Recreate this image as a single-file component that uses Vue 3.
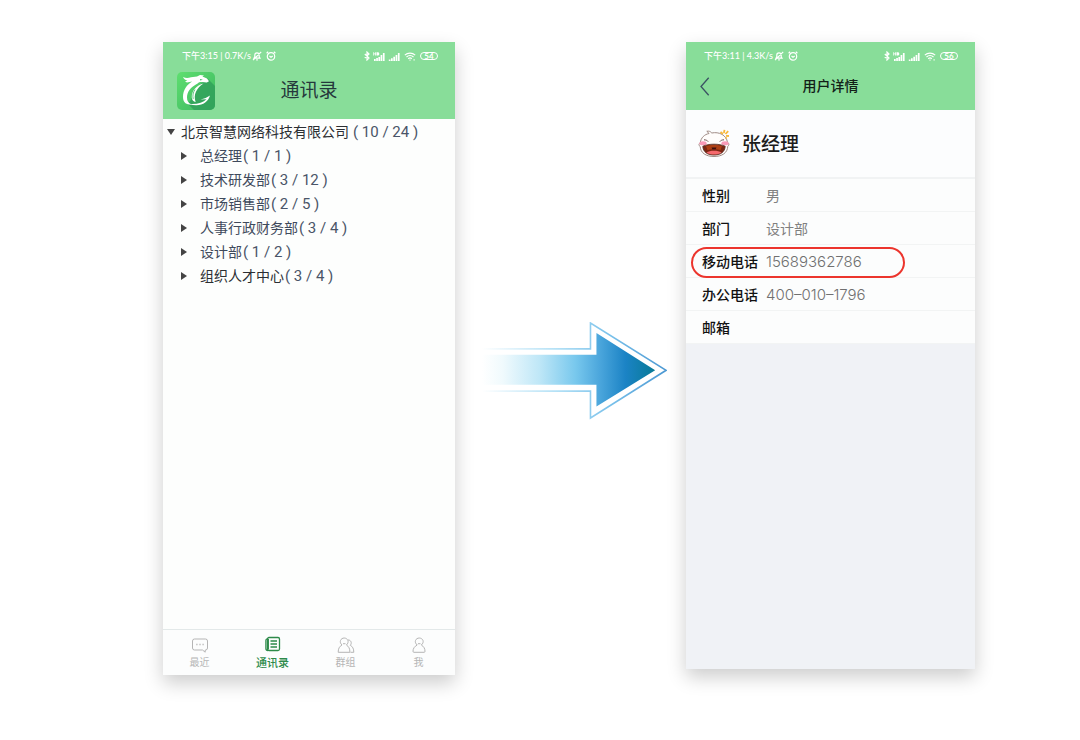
<script setup>
import { ref } from 'vue'

const statusBars = {
  contacts: { time: '下午3:15 | 0.7K/s', battery: '54' },
  detail: { time: '下午3:11 | 4.3K/s', battery: '56' }
}

const open = ref(true)
const activeTab = ref('contacts')

const departments = [
  { name: '总经理', count: '( 1 / 1 )' },
  { name: '技术研发部', count: '( 3 / 12 )' },
  { name: '市场销售部', count: '( 2 / 5 )' },
  { name: '人事行政财务部', count: '( 3 / 4 )' },
  { name: '设计部', count: '( 1 / 2 )' },
  { name: '组织人才中心', count: '( 3 / 4 )', dark: true }
]

const tabs = [
  { id: 'recent', label: '最近' },
  { id: 'contacts', label: '通讯录' },
  { id: 'groups', label: '群组' },
  { id: 'me', label: '我' }
]

const fields = [
  { label: '性别', value: '男' },
  { label: '部门', value: '设计部' },
  { label: '移动电话', value: '15689362786', number: true, marked: true },
  { label: '办公电话', value: '400–010–1796', number: true },
  { label: '邮箱', value: '' }
]
</script>

<template>
  <main class="stage">
    <section
      v-for="(bar, screen) in statusBars"
      :key="screen"
      class="phone"
      :class="screen"
    >
      <header class="head">
        <div class="status">
          <span class="status-text">{{ bar.time }}</span>
          <svg class="s-icon" width="10" height="10" viewBox="0 0 10 10">
            <path d="M2 7.2h6L7.2 5.8V4A2.2 2.2 0 0 0 2.8 4v1.8zM4.2 8.8h1.6M1 9.2L9.2.8" />
          </svg>
          <svg class="s-icon alarm" width="10" height="10" viewBox="0 0 10 10">
            <circle cx="5" cy="5.4" r="3.7" />
            <path d="M3.5 5l1.5 1.3L6.7 5M.6 2.2L2.2.7M9.4 2.2L7.8.7" />
          </svg>
          <span class="grow"></span>
          <svg class="s-icon" width="6" height="10" viewBox="0 0 6 10">
            <path d="M.8 3l4.2 4-2 2V1l2 2L.8 7" />
          </svg>
          <svg class="s-fill sig" width="12" height="9" viewBox="0 0 12 9">
            <path d="M.3.3h.8v1.2h1V.3h.8v3.200h-.8V2.300h-1v1.200H.3zM3.500.3h1.800l.9.8v1.600l-.9.8H3.500zM1 7h1.700v2H1zM3.200 6h1.700v3H3.200zM5.400 5h1.700v4H5.400zM7.600 3h1.700v6H7.600zM9.900 1h1.700v8H9.900z" />
          </svg>
          <svg class="s-fill sig" width="12" height="9" viewBox="0 0 12 9">
            <path d="M.8 7.400h1.700V9H.8zM3 6.200h1.700V9H3zM5.300 4.800H7V9H5.300zM7.600 3h1.700v6H7.600zM9.900 1h1.700v8H9.900z" />
          </svg>
          <svg class="s-icon wifi" width="12" height="9" viewBox="0 0 12 9">
            <path d="M.8 3.100c3-2.600 7.400-2.600 10.400 0M2.500 5c2-1.800 5-1.800 7 0M4.200 6.700c1.100-.9 2.500-.9 3.600 0M5.500 8.200h1M9.500 7.900h1.200" />
          </svg>
          <span class="battery">{{ bar.battery }}</span>
        </div>

        <div class="titlebar">
          <svg v-if="screen === 'contacts'" class="logo" width="38" height="38" viewBox="0 0 38 38" aria-label="logo">
            <defs>
              <linearGradient id="logoBg" x1="0" x2="1" y1="0" y2="1">
                <stop offset="0" stop-color="#5fdf70" />
                <stop offset="1" stop-color="#3bb660" />
              </linearGradient>
            </defs>
            <rect width="38" height="38" rx="5" fill="url(#logoBg)" />
            <path d="M30 6l8 8v19a5 5 0 0 1-5 5H17l-6-6 13-20z" fill="#2f9f5a" opacity=".8" />
            <path d="M6 5c3 1.200 5 1.100 8 .2l6-.7 3-1.500 4 .4-1.600 1.200 4.600 1.900L32 9.300l-2.200 1.300-4.800-.5c-2-.1-3.200.4-4.400 1.400C13.500 15 10 20 10 25.500c0 3.700 1.500 5.700 4.200 6.700C9 33.200 6 30.200 6 24.800 6 18.300 10 12.300 15.200 9.500L10 10.600l-2-1.200 2.300-.9C8 8 6.800 6.800 6 5z" fill="#fff" />
            <path d="M23 7l2.800.8-2.600.6z" fill="#43b968" />
            <path d="M26.500 11.500C19.500 13 14.500 19 14.800 25.500c.1 2.500 1.500 4 3.900 4.500-2.700-7 .8-14 7.800-18.500z" fill="#fff" />
            <path d="M18 17.500c-2 3-2.500 6-1.800 9.500" fill="none" stroke="#43b968" stroke-width=".8" />
            <path d="M12 32c8 .6 14-1 17.500-4.700l-6 .3c4-1 6.500-2.200 9.500-4.100C31 31 23 35.500 12 32z" fill="#fff" />
          </svg>
          <button v-else class="back" type="button" aria-label="返回">
            <svg width="10" height="19" viewBox="0 0 10 19"><path d="M8.700.8L1 9.500l7.700 8.700" /></svg>
          </button>
          <h1>{{ screen === 'contacts' ? '通讯录' : '用户详情' }}</h1>
        </div>
      </header>

      <template v-if="screen === 'contacts'">
        <div class="tree">
          <button class="node root" type="button" :aria-expanded="open" @click="open = !open">
            <span class="caret down"></span>
            <span>北京智慧网络科技有限公司</span>
            <span class="count">( 10 / 24 )</span>
          </button>
          <ul v-show="open">
            <li v-for="d in departments" :key="d.name">
              <button class="node" type="button" :class="{ dark: d.dark }">
                <span class="caret"></span>
                <span>{{ d.name }}</span>
                <span class="count">{{ d.count }}</span>
              </button>
            </li>
          </ul>
        </div>

        <nav class="tabs">
          <button
            v-for="t in tabs"
            :key="t.id"
            type="button"
            :class="{ active: activeTab === t.id }"
            @click="activeTab = t.id"
          >
            <svg width="18" height="18" viewBox="0 0 18 18">
              <template v-if="t.id === 'recent'">
                <path d="M3.500 3h11a2 2 0 0 1 2 2v7a2 2 0 0 1-2 2h-.3v2.200L11.500 14h-8a2 2 0 0 1-2-2V5a2 2 0 0 1 2-2z" />
                <path class="dots" d="M5.300 8.500h1.200M8.400 8.500h1.200M11.500 8.500h1.200" />
              </template>
              <template v-else-if="t.id === 'contacts'">
                <rect x="3.500" y="1.500" width="12" height="13" rx="1.500" />
                <path d="M3.500 3c-1.200 0-1.600.5-1.600 1.800v7.600c0 1.400.5 2.100 2.100 2.100M4.300 3v10.500M6.500 5h6.500M6.500 8h6.500M6.500 11h6.500" />
              </template>
              <template v-else-if="t.id === 'groups'">
                <path d="M5 9C3.400 7.500 3 6 3.500 4.500c1.200-3.300 6.200-3.300 7.400 0 .5 1.500.1 3-1.500 4.500 2.400 1.500 3.500 3.500 3.500 7.300H1.200c0-3.800 1.200-5.800 3.800-7.300zM6 7.700h2.500M11 4c2.500-.3 4.500 2.700 2.300 5.300 2.300 1.200 3.500 3.400 3.500 7h-3.300" />
              </template>
              <template v-else>
                <path d="M7.200 9C5.500 7.500 5 6 5.500 4.500c1.200-3.300 6.300-3.300 7.500 0 .5 1.500 0 3-1.700 4.500 2.500 1.500 3.700 3.500 3.700 6.300 0 .7-.3 1-1 1H4c-.7 0-1-.3-1-1C3 12.500 4.500 10.500 7.200 9zM8 7.700h2.500" />
              </template>
            </svg>
            <span>{{ t.label }}</span>
          </button>
        </nav>
      </template>

      <template v-else>
        <div class="person">
          <svg width="32" height="30" viewBox="0 0 32 30" aria-label="头像">
            <path d="M11 4.500C10.300 3.500 9.700 2.800 8.800 2.300c2-.5 3.700.1 5 1.700C21 2.500 28.500 6 29.500 13.500c1.700.5 2 2.600.3 3.700C29.500 24 24 27.500 16 27.500S2.500 24 2.200 17.500C.5 16.700.6 14.500 2.200 14 3 8.500 6.500 5.500 11 4.500z" fill="#fffdfc" stroke="#a08c86" stroke-width="1" />
            <ellipse cx="5" cy="14.200" rx="3.600" ry="2" fill="#f99ab8" />
            <ellipse cx="27" cy="14.200" rx="3.600" ry="2" fill="#f99ab8" />
            <path d="M6 10.800c2 0 3.300.7 4.200 1.800M26 10.800c-2 0-3.300.7-4.200 1.800" fill="none" stroke="#6a5050" stroke-width="1" />
            <path d="M4.800 17.200c6-2.700 16.400-2.700 22.400 0-.2 5.600-4.500 8.900-11.200 8.900S5 22.800 4.800 17.200z" fill="#7c2613" stroke="#563026" stroke-width=".8" />
            <path d="M8 17c4.500-1.500 11.500-1.500 16 0l-1.500 4.200c-3.500-1.400-9.500-1.400-13 0z" fill="#ad4015" />
            <path d="M13.500 18.500h5l-.8 1.800h-3.400z" fill="#3d1010" />
            <path d="M8.500 23.500c3.500-2.500 11.500-2.500 15 0-3.500 2.700-11.500 2.700-15 0z" fill="#f5696d" />
            <path d="M22.500 3l2.500 2M26.500.8l-.6 3.200M30.200 2.200L27.500 5M31 7l-3-.2M28.500 9.500l-.8-1" stroke="#f8b83c" stroke-width="1.800" />
          </svg>
          <h2>张经理</h2>
        </div>
        <dl class="fields">
          <div v-for="f in fields" :key="f.label" class="field" :class="{ marked: f.marked }">
            <dt>{{ f.label }}</dt>
            <dd :class="{ number: f.number }">{{ f.value }}</dd>
          </div>
        </dl>
      </template>
    </section>

    <svg class="arrow" viewBox="0 0 188 98" aria-hidden="true">
      <defs>
        <linearGradient id="arrowFill" gradientUnits="userSpaceOnUse" x1="2" x2="176" y1="0" y2="0">
          <stop offset="0" stop-color="#fff" />
          <stop offset=".12" stop-color="#f0fafd" />
          <stop offset=".33" stop-color="#bfe7f7" />
          <stop offset=".54" stop-color="#78c8ed" />
          <stop offset=".68" stop-color="#4ba6dc" />
          <stop offset=".83" stop-color="#1b83c5" />
          <stop offset="1" stop-color="#087a96" />
        </linearGradient>
        <linearGradient id="arrowLine" gradientUnits="userSpaceOnUse" x1="2" x2="188" y1="0" y2="0">
          <stop offset="0" stop-color="#fff" />
          <stop offset=".4" stop-color="#b4e1f6" />
          <stop offset=".7" stop-color="#78c0ea" />
          <stop offset="1" stop-color="#4a97d2" />
        </linearGradient>
      </defs>
      <path d="M2 27h109V1l76 47.500L111 96.500V69.500H2" fill="none" stroke="url(#arrowLine)" stroke-width="1.600" />
      <path d="M2 33h115V11l59 37.500L117 85V63H2z" fill="url(#arrowFill)" />
    </svg>
  </main>
</template>

<style>
body {
  margin: 0;
  background: #fff;
}
</style>

<style scoped>
.stage {
  box-sizing: border-box;
  min-height: 100vh;
  padding: 42px 105px 65px 163px;
  display: grid;
  grid-template-columns: 292fr 231fr 289fr;
  font-family: "Liberation Sans", "Noto Sans CJK SC", sans-serif;
}

h1,
h2,
ul,
dl,
dd {
  margin: 0;
  padding: 0;
}

button {
  margin: 0;
  padding: 0;
  border: 0;
  background: none;
  color: inherit;
  font: inherit;
  cursor: pointer;
}

svg {
  flex: none;
}

.phone {
  grid-row: 1;
  display: flex;
  flex-direction: column;
  min-width: 0;
  box-shadow: 0 8px 18px rgba(0, 0, 0, 0.2);
}

.contacts {
  grid-column: 1;
  background: #fdfefd;
}

.detail {
  grid-column: 3;
  margin-bottom: 6px;
  background: #f0f2f6;
}

.head {
  background: #88dd99;
}

.contacts .head {
  padding-bottom: 7px;
}

.detail .head {
  padding-bottom: 8px;
}

.status {
  display: flex;
  align-items: center;
  height: 28px;
  padding: 0 17px 0 19px;
  color: #fff;
  font: 700 9px/12px Lato, "Noto Sans CJK SC", sans-serif;
  white-space: nowrap;
}

.detail .status {
  padding-left: 18px;
}

.status-text {
  margin-right: 1px;
  font-weight: 500;
}

.grow {
  flex: 1;
}

.s-icon {
  fill: none;
  stroke: #fff;
  stroke-width: 1.2;
}

.s-fill {
  fill: #fff;
}

.alarm {
  margin-left: 4px;
}

.sig {
  margin-left: 3px;
}

.wifi {
  margin-left: 4px;
}

.battery {
  box-sizing: border-box;
  width: 18px;
  height: 8px;
  margin-left: 4px;
  border: 1px solid #fff;
  border-radius: 4px;
  font-size: 8px;
  line-height: 6px;
  text-align: center;
}

.titlebar {
  display: grid;
  grid-template-columns: 1fr auto 1fr;
  align-items: center;
  padding: 0 14px;
}

.contacts .titlebar {
  height: 42px;
}

.detail .titlebar {
  height: 32px;
}

h1 {
  grid-column: 2;
  font-weight: 400;
}

.contacts h1 {
  font-size: 19px;
  line-height: 28px;
  color: #25383c;
}

.detail h1 {
  font-size: 14px;
  line-height: 20px;
  font-weight: 500;
  color: #122018;
}

.back {
  justify-self: start;
  display: flex;
}

.back path {
  fill: none;
  stroke: #3b5363;
  stroke-width: 1.3;
}

.tree {
  flex: 1;
  padding-top: 1px;
}

.tree ul {
  list-style: none;
}

.node {
  display: flex;
  align-items: center;
  width: 100%;
  height: 24px;
  padding-left: 18px;
  color: #3f4a5c;
  font-size: 14px;
  line-height: 24px;
  text-align: left;
  white-space: nowrap;
}

.root {
  padding-left: 4px;
  color: #2c2f33;
}

.dark {
  color: #2c2f33;
}

.caret {
  width: 0;
  height: 0;
  margin-right: 13px;
  border: 4px solid transparent;
  border-left: 6px solid #444;
  border-right: 0;
}

.caret.down {
  margin-right: 6px;
  border: 4px solid transparent;
  border-top: 6px solid #444;
  border-bottom: 0;
}

.count {
  margin-left: 1px;
  font-family: Roboto, sans-serif;
  font-size: 15px;
  color: #4a5568;
}

.root .count {
  margin-left: 4px;
}

.tabs {
  display: grid;
  grid-template-columns: repeat(4, 1fr);
  height: 45px;
  border-top: 1px solid #e3e9e9;
  background: #fcfdfd;
}

.tabs button {
  display: flex;
  flex-direction: column;
  align-items: center;
  padding-top: 6px;
  color: #b5b5b5;
  font-size: 10px;
  line-height: 18px;
}

.tabs .active {
  color: #2d8a4a;
  font-size: 11px;
  font-weight: 500;
}

.tabs svg {
  fill: none;
  stroke: currentColor;
  stroke-width: 1;
}

.tabs .active svg {
  stroke-width: 1.3;
}

.tabs .dots {
  stroke-width: 1.4;
}

.person {
  display: flex;
  align-items: center;
  gap: 12px;
  height: 67px;
  padding-left: 12px;
  border-bottom: 2px solid #f1f3f4;
  background: #fcfdfe;
}

h2 {
  padding-top: 2px;
  font-size: 19px;
  line-height: 28px;
  font-weight: 500;
  color: #1c1c1c;
}

.fields {
  background: #fcfdfd;
}

.field {
  position: relative;
  display: flex;
  align-items: center;
  height: 32px;
  padding-left: 16px;
  border-bottom: 1px solid #f2f4f4;
  font-size: 14px;
  line-height: 20px;
  white-space: nowrap;
}

.field dt,
.field dd {
  padding-top: 2px;
}

.field dt {
  width: 64px;
  font-weight: 500;
  color: #111;
}

.field dd {
  font-family: Inter, "Noto Sans CJK SC", sans-serif;
  color: #808080;
}

.field .number {
  font-size: 15px;
  font-weight: 300;
  color: #707070;
}

.marked::after {
  content: "";
  position: absolute;
  box-sizing: border-box;
  top: 2px;
  left: 5px;
  width: 74%;
  height: 31px;
  border: 2px solid #ec352d;
  border-radius: 16px;
}

.arrow {
  grid-row: 1;
  grid-column: 2;
  align-self: center;
  justify-self: center;
  width: 81%;
  margin: 25px 0 0 6px;
}
</style>
